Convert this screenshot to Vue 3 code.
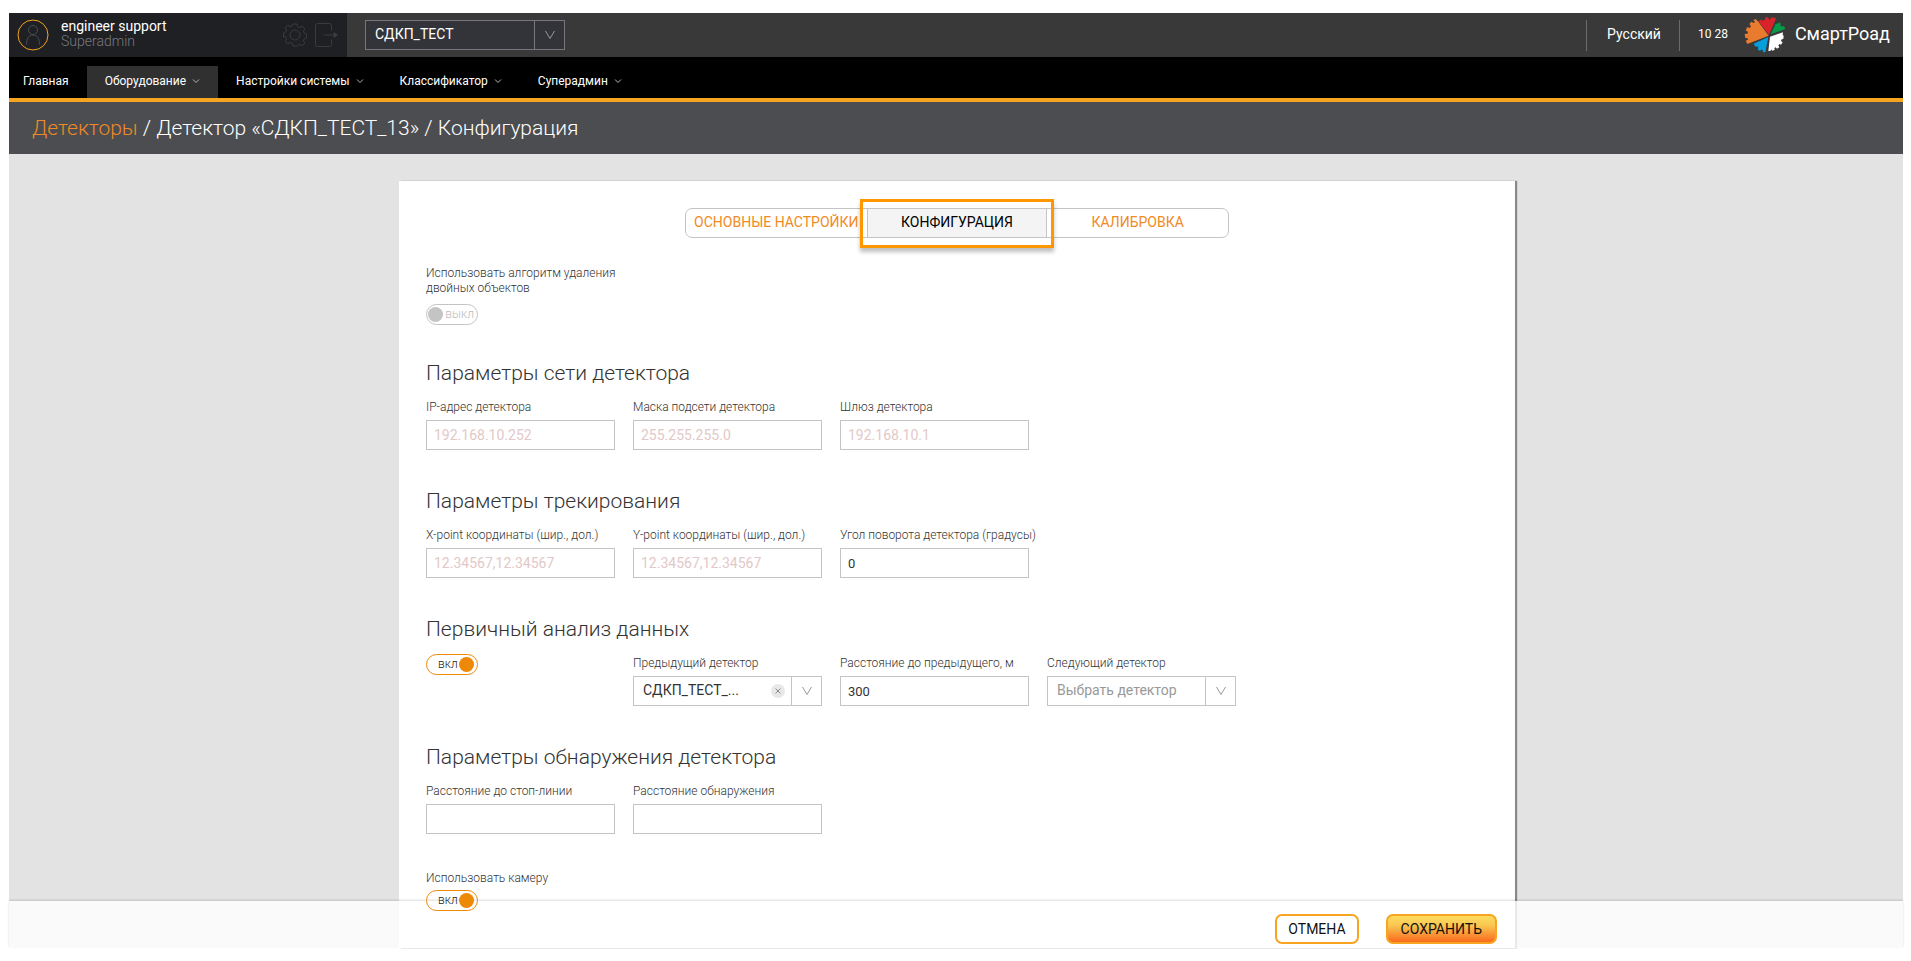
<script setup>
import { ref } from 'vue'

const menu = [
  { title: 'Главная', sub: false, active: false },
  { title: 'Оборудование', sub: true, active: true },
  { title: 'Настройки системы', sub: true, active: false },
  { title: 'Классификатор', sub: true, active: false },
  { title: 'Суперадмин', sub: true, active: false }
]
const tabs = ['ОСНОВНЫЕ НАСТРОЙКИ', 'КОНФИГУРАЦИЯ', 'КАЛИБРОВКА']
const activeTab = ref(1)

const network = [
  { id: 'ip', label: 'IP-адрес детектора', hint: '192.168.10.252' },
  { id: 'mask', label: 'Маска подсети детектора', hint: '255.255.255.0' },
  { id: 'gateway', label: 'Шлюз детектора', hint: '192.168.10.1' }
]
const tracking = [
  { id: 'xpoint', label: 'X-point координаты (шир., дол.)', hint: '12.34567,12.34567' },
  { id: 'ypoint', label: 'Y-point координаты (шир., дол.)', hint: '12.34567,12.34567' },
  { id: 'angle', label: 'Угол поворота детектора (градусы)', value: '0' }
]
const detection = [
  { id: 'stopline', label: 'Расстояние до стоп-линии' },
  { id: 'range', label: 'Расстояние обнаружения' }
]
const removeDoubles = ref(false)
const analysis = ref(true)
const camera = ref(true)
const distance = ref('300')
</script>

<template>
  <div class="app">
    <header class="topbar">
      <div class="user">
        <svg class="avatar" viewBox="0 0 32 32" fill="none">
          <circle cx="16" cy="16" r="15" stroke="#f7a021" />
          <circle cx="16" cy="11" r="4.5" stroke="#4c4d51" />
          <path d="M9.500 25.500c0-6 2.500-9.500 6.500-9.500s6.500 3.500 6.500 9.500" stroke="#4c4d51" />
        </svg>
        <div class="names">
          <span class="name">engineer support</span>
          <span class="role">Superadmin</span>
        </div>
        <button class="icon" aria-label="Настройки">
          <svg viewBox="0 0 24 24" fill="none" stroke="#3a3b3e">
            <circle cx="12" cy="12" r="5" />
            <path d="M10 1h4l.6 2.600 2.300 1 2.300-1.500 2.700 2.700-1.500 2.300 1 2.300 2.100.6v4l-2.100.6-1 2.300 1.500 2.300-2.700 2.700-2.300-1.500-2.300 1L14 23h-4l-.6-2.600-2.300-1-2.300 1.500-2.700-2.700 1.500-2.300-1-2.300L.5 14v-4l2.100-.6 1-2.300-1.500-2.300 2.700-2.700 2.300 1.500 2.300-1z" />
          </svg>
        </button>
        <button class="icon" aria-label="Выход">
          <svg viewBox="0 0 24 24" fill="none" stroke="#3a3b3e">
            <path d="M16.500 7.500v-5q0-2-2-2h-12q-2 0-2 2v19q0 2 2 2h12q2 0 2-2v-5M8.500 12H21" />
            <path d="m19 9.500 3.500 2.500-3.500 2.500z" fill="#3a3b3e" />
          </svg>
        </button>
      </div>
      <div class="select dark">
        <select aria-label="Объект"><option>СДКП_ТЕСТ</option></select>
        <span class="chev"><svg viewBox="0 0 12 10" fill="none" stroke="currentColor"><path d="M1.500 1 6 8.500 10.500 1" /></svg></span>
      </div>
      <button class="lang">Русский</button>
      <time class="clock">10 28</time>
      <div class="brand">
        <svg viewBox="612 50 126 114" class="logo">
          <path fill="#e87b2e" d="M686 109 622 134 617 124 624 121 623 117 616 116 614 104 622 103 624 98 617 93 622 83 629 86 633 81 628 74 634 67 641 71 645 68 640 62 647 59 654 66z" />
          <path fill="#d8232a" d="M687 107 655 66 665 60 668 64 675 61 675 54 685 54 686 60 692 60 693 54 708 56 706 63z" />
          <path fill="#069a49" d="M692 105 708 72 713 75 716 69 723 73 721 78 725 82 732 80 736 89z" />
          <path fill="#fff" d="M690 112 729 99 728 107 731 109 730 119 725 120 723 125 728 129 723 136 718 134 715 138 718 144 711 148 707 144 703 146 704 152 696 154 694 150 691 155 685 155z" />
          <path fill="#069edb" d="M685 113 676 159 668 158 669 152 664 151 660 154 653 151 655 145 652 141 647 143 641 133z" />
        </svg>
        <span>СмартРоад</span>
      </div>
    </header>

    <nav class="menu">
      <a v-for="m in menu" :key="m.title" href="#" :class="{ active: m.active }">
        {{ m.title }}
        <svg v-if="m.sub" viewBox="0 0 8 6" fill="none" stroke="#b5b5b5"><path d="m1 1.500 3 3 3-3" /></svg>
      </a>
    </nav>

    <h1 class="crumbs"><a href="#">Детекторы</a> / Детектор «СДКП_ТЕСТ_13» / Конфигурация</h1>

    <main>
      <form class="card" @submit.prevent>
        <div class="tabs">
          <button v-for="(t, i) in tabs" :key="t" type="button" :class="{ active: i === activeTab }" @click="activeTab = i">{{ t }}</button>
        </div>

        <div class="field first">
          <label for="doubles">Использовать алгоритм удаления двойных объектов</label>
          <label class="toggle" :class="{ on: removeDoubles }">
            <input id="doubles" v-model="removeDoubles" type="checkbox"><span>{{ removeDoubles ? 'вкл' : 'выкл' }}</span>
          </label>
        </div>

        <section>
          <h2>Параметры сети детектора</h2>
          <div class="row">
            <div v-for="f in network" :key="f.id" class="field">
              <label :for="f.id">{{ f.label }}</label>
              <input :id="f.id" type="text" :placeholder="f.hint">
            </div>
          </div>
        </section>

        <section>
          <h2>Параметры трекирования</h2>
          <div class="row">
            <div v-for="f in tracking" :key="f.id" class="field">
              <label :for="f.id">{{ f.label }}</label>
              <input :id="f.id" type="text" :placeholder="f.hint" :value="f.value">
            </div>
          </div>
        </section>

        <section>
          <h2>Первичный анализ данных</h2>
          <div class="row">
            <div class="field">
              <label class="toggle" :class="{ on: analysis }">
                <input v-model="analysis" type="checkbox" aria-label="Первичный анализ данных"><span>{{ analysis ? 'вкл' : 'выкл' }}</span>
              </label>
            </div>
            <div class="field">
              <label for="prev">Предыдущий детектор</label>
              <div class="select">
                <select id="prev"><option>СДКП_ТЕСТ_...</option></select>
                <button type="button" class="clear" aria-label="Очистить">
                  <svg viewBox="0 0 14 14" fill="none" stroke="#8c8c8c"><path d="m4.500 4.500 5 5m0-5-5 5" /></svg>
                </button>
                <span class="chev"><svg viewBox="0 0 12 10" fill="none" stroke="currentColor"><path d="M1.500 1 6 8.500 10.500 1" /></svg></span>
              </div>
            </div>
            <div class="field">
              <label for="dist">Расстояние до предыдущего, м</label>
              <input id="dist" v-model="distance" type="text">
            </div>
            <div class="field">
              <label for="next">Следующий детектор</label>
              <div class="select empty">
                <select id="next"><option>Выбрать детектор</option></select>
                <span class="chev"><svg viewBox="0 0 12 10" fill="none" stroke="currentColor"><path d="M1.500 1 6 8.500 10.500 1" /></svg></span>
              </div>
            </div>
          </div>
        </section>

        <section>
          <h2>Параметры обнаружения детектора</h2>
          <div class="row">
            <div v-for="f in detection" :key="f.id" class="field">
              <label :for="f.id">{{ f.label }}</label>
              <input :id="f.id" type="text">
            </div>
          </div>
        </section>

        <div class="field last">
          <label for="camera">Использовать камеру</label>
          <label class="toggle" :class="{ on: camera }">
            <input id="camera" v-model="camera" type="checkbox"><span>{{ camera ? 'вкл' : 'выкл' }}</span>
          </label>
        </div>
      </form>
    </main>

    <footer>
      <div class="actions">
        <button class="cancel">ОТМЕНА</button>
        <button class="save">СОХРАНИТЬ</button>
      </div>
    </footer>
  </div>
</template>

<style>
body {
  background: #fff;
}
#app {
  box-sizing: border-box;
  min-height: 100vh;
  padding: 13px 8px 13px 9px;
  display: flex;
}
</style>

<style scoped>
.app,
.app * {
  box-sizing: border-box;
}
.app {
  position: relative;
  flex: 1;
  display: flex;
  flex-direction: column;
  font-family: Roboto, "Noto Sans", sans-serif;
  font-size: 13px;
  color: #333;
}
button,
input,
select {
  font: inherit;
  color: inherit;
}
button {
  padding: 0;
  border: 0;
  background: none;
  cursor: pointer;
}
svg {
  display: block;
}
a {
  color: inherit;
  text-decoration: none;
}
.topbar {
  display: flex;
  align-items: center;
  height: 44px;
  background: #383938;
  color: #fff;
}
.user {
  display: flex;
  align-items: center;
  width: 338px;
  height: 44px;
  padding: 0 8px;
  background: #1f2024;
}
.avatar {
  width: 32px;
  height: 32px;
}
.names {
  display: flex;
  flex: 1;
  flex-direction: column;
  margin-left: 12px;
  padding-bottom: 2px;
  font-size: 14px;
  line-height: 15px;
}
.role {
  color: #797a7e;
  font-weight: 300;
}
.icon {
  margin-left: 8px;
}
.icon svg {
  width: 24px;
  height: 24px;
}
.select {
  position: relative;
  display: flex;
  height: 30px;
  border: 1px solid #c4c4c4;
  color: #333;
  font-size: 14px;
}
.select select {
  flex: 1;
  min-width: 0;
  padding: 0 9px 2px;
  border: 0;
  outline: 0;
  appearance: none;
  background: transparent;
}
.select.empty select {
  color: #999;
}
.chev {
  display: flex;
  align-items: center;
  justify-content: center;
  width: 30px;
  border-left: 1px solid #c4c4c4;
  color: #999;
  pointer-events: none;
}
.chev svg {
  width: 12px;
  height: 10px;
}
.select.dark {
  width: 200px;
  margin: 0 auto 0 18px;
  border-color: #77777b;
  background: #33343a;
  color: #fff;
}
.dark .chev {
  border-color: #77777b;
}
.dark option {
  color: #333;
}
.clear {
  align-self: center;
  margin-right: 6px;
  border-radius: 50%;
  background: #e8e8e8;
}
.clear svg {
  width: 14px;
  height: 14px;
}
.lang,
.clock {
  height: 31px;
  padding: 0 18px 2px 20px;
  border-left: 1px solid #6a6b6a;
  line-height: 28px;
}
.lang {
  font-size: 14px;
}
.clock {
  padding-right: 16px;
  padding-left: 18px;
  font-size: 12px;
}
.brand {
  display: flex;
  align-items: center;
  gap: 9px;
  padding-right: 13px;
  font-size: 18px;
}
.brand span {
  padding-bottom: 3px;
}
.logo {
  width: 42px;
  height: 38px;
}
.menu {
  display: flex;
  height: 45px;
  padding-top: 9px;
  border-bottom: 4px solid #f7a521;
  background: #000;
  color: #fff;
  font-size: 12px;
}
.menu a {
  display: flex;
  align-items: center;
  gap: 6px;
  padding: 0 18px 2px;
}
.menu a:first-child {
  padding-left: 14px;
}
.menu a.active {
  background: #303030;
}
.menu svg {
  width: 8px;
  height: 6px;
}
.crumbs {
  margin: 0;
  padding: 0 23px;
  background: #4c4d51;
  color: #fff;
  font-size: 21px;
  font-weight: 300;
  line-height: 52px;
}
.crumbs a {
  color: #f08a24;
}
main {
  flex: 1;
  display: flex;
  justify-content: center;
  padding: 27px 0 0 2px;
  background: #e3e3e3;
}
.card {
  width: 1116px;
  padding: 27px 27px 30px;
  background: #fff;
  box-shadow: 2px 0 1px #888;
}
.tabs {
  display: grid;
  grid-template-columns: repeat(3, 1fr);
  width: 544px;
  height: 30px;
  margin: 0 auto;
  border: 1px solid #c4c4c4;
  border-radius: 7px;
}
.tabs button {
  position: relative;
  padding-bottom: 2px;
  color: #f08a24;
  font-size: 14px;
  white-space: nowrap;
}
.tabs .active {
  border: solid #c4c4c4;
  border-width: 0 1px;
  background: #f4f4f4;
  color: #000;
}
.tabs .active::after {
  content: "";
  position: absolute;
  inset: -10px -8px -11px;
  border: 3px solid #ff9800;
  box-shadow: 0 4px 4px rgba(0, 0, 0, .25);
}
.field {
  width: 189px;
  font-weight: 300;
}
.field > label {
  display: block;
  font-size: 12px;
  line-height: 15px;
  white-space: nowrap;
}
.field.first {
  width: 210px;
  margin-top: 28px;
}
.field.first > label {
  white-space: normal;
}
.field > input,
.field > .select {
  width: 100%;
  margin-top: 5px;
}
.field > input {
  height: 30px;
  padding: 0 7px;
  border: 1px solid #c4c4c4;
  outline: 0;
  background: #fff;
  font-size: 13px;
  font-weight: 400;
}
.field > input::placeholder {
  color: #e3c8c8;
  font-size: 14px;
  opacity: 1;
}
.field > .select {
  font-weight: 400;
}
.field > .toggle {
  position: relative;
  z-index: 2;
  display: flex;
  align-items: center;
  justify-content: space-between;
  width: 52px;
  height: 21px;
  padding: 0 3px 0 1px;
  border: 1px solid #c4c4c4;
  border-radius: 11px;
  color: #bbb;
  font-size: 12px;
  cursor: pointer;
}
.toggle input {
  width: 15px;
  height: 15px;
  margin: 0;
  border-radius: 50%;
  appearance: none;
  background: #c4c4c4;
}
.field > .toggle.on {
  flex-direction: row-reverse;
  padding: 0 3px 0 11px;
  border-color: #ee8907;
  color: #222;
}
.toggle.on input {
  background: #ee8907;
}
.first > .toggle {
  margin-top: 8px;
}
section {
  margin-top: 35px;
}
section:first-of-type {
  margin-top: 32px;
}
h2 {
  margin: 0;
  font-size: 21px;
  font-weight: 300;
  line-height: 33px;
}
.row {
  display: flex;
  gap: 18px;
  padding-top: 8px;
}
.row .field > label:not(.toggle) {
  padding-top: 2px;
}
.field.last {
  margin-top: 37px;
}
.last > .toggle {
  margin-top: 4px;
}
footer {
  position: absolute;
  right: 0;
  bottom: 0;
  left: 0;
  display: flex;
  justify-content: center;
  padding-left: 2px;
  background: rgba(255, 255, 255, .82);
  box-shadow: 0 -1px 2px rgba(0, 0, 0, .15);
}
.actions {
  display: flex;
  justify-content: flex-end;
  gap: 27px;
  width: 1116px;
  padding: 13px 18px 4px;
}
.actions button {
  height: 30px;
  padding: 0 11px;
  border: 2px solid #f7a521;
  border-radius: 7px;
  background: #fff;
  color: #111;
  font-size: 14px;
}
.actions .save {
  padding: 0 13px;
  background: linear-gradient(#fbdc62, #f9c851 35%, #fa6a1e);
}
</style>
